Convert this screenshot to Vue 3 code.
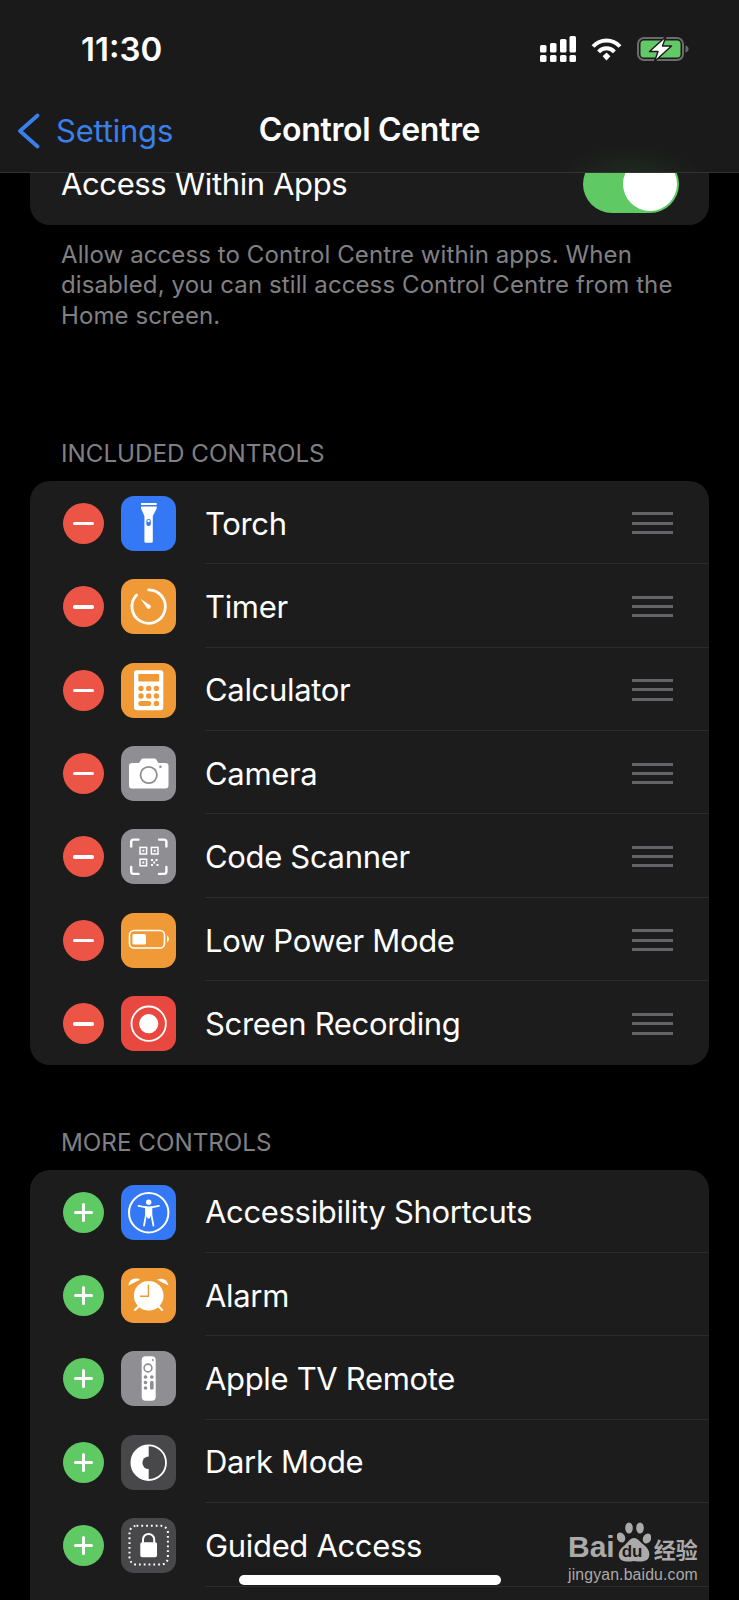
<template>
  <div class="screen">
    <header class="nav">
      <div class="status">
        <span class="time">11:30</span>
        <div class="status-icons">
          <svg width="36" height="26" viewBox="0 0 36 26" fill="#fff">
            <rect x="0" y="19" width="6.5" height="7" rx="1.6" />
            <rect x="10" y="19" width="6.5" height="7" rx="1.6" />
            <rect x="20" y="19" width="6.5" height="7" rx="1.6" />
            <rect x="29.5" y="19" width="6.5" height="7" rx="1.6" />
            <rect x="0" y="9" width="6.5" height="7.5" rx="1.6" />
            <rect x="10" y="7" width="6.5" height="9.5" rx="1.6" />
            <rect x="20" y="3" width="6.5" height="13.5" rx="1.6" />
            <rect x="29.5" y="0" width="6.5" height="16.5" rx="1.6" />
          </svg>
          <svg class="wifi" width="31" height="24" viewBox="0 0 31 24" fill="none" stroke="#fff" stroke-width="4">
            <path d="M2 9.5C9.5 1.5 21.5 1.5 29 9.5" />
            <path d="M7.6 14.8C12 10.2 19 10.2 23.4 14.8" />
            <path d="M11.6 19.2L15.5 15.6L19.4 19.2L15.5 23.4Z" fill="#fff" stroke="none" />
          </svg>
          <svg class="battery" width="52" height="26" viewBox="0 0 52 26">
            <rect x="1" y="2" width="45" height="22" rx="6" fill="none" stroke="#6b6b6b" stroke-width="2" />
            <rect x="3.5" y="4.5" width="40" height="17" rx="3.5" fill="#61ca67" />
            <path d="M48.5 9.5C50.5 10 51.5 11.2 51.5 13S50.5 16 48.5 16.5Z" fill="#6b6b6b" />
            <path d="M29 0.5L12.5 15.5H21L17.5 25.5L34.5 10H25.5Z" fill="#fff" stroke="#1a1a1a" stroke-width="1.4" stroke-linejoin="round" />
          </svg>
        </div>
      </div>
      <div class="bar">
        <span class="back">
          <svg width="23" height="36" viewBox="0 0 23 36" fill="none" stroke="#3a7fea" stroke-width="3.8" stroke-linecap="round" stroke-linejoin="round">
            <path d="M20.5 2.5L3 18L20.5 33.5" />
          </svg>
          Settings
        </span>
        <span class="title">Control Centre</span>
      </div>
    </header>

    <main class="content">
      <section class="group">
        <div class="access">
          <span>Access Within Apps</span>
          <span class="toggle"><i></i></span>
        </div>
      </section>
      <p class="note">Allow access to Control Centre within apps. When disabled, you can still access Control Centre from the Home screen.</p>

      <h2 class="head first">INCLUDED CONTROLS</h2>
      <section class="group">
        <div v-for="c in included" :key="c.name" class="row">
          <span class="mark remove"><i></i></span>
          <span class="icon" :class="c.tone">
            <svg width="55" height="55" viewBox="0 0 55 55">
              <g v-if="c.icon === 'torch'">
                <rect x="20" y="7" width="15.7" height="2" fill="#fff" />
                <path d="M20 10.5H35.7V12.5L31.8 20V45.5Q31.8 46.8 30.5 46.8H24.7Q23.4 46.8 23.4 45.5V20L20 12.5Z" fill="#fff" />
                <rect x="25.4" y="23" width="4.4" height="7" rx="2" fill="#3478f6" />
                <circle cx="27.6" cy="25" r="1.2" fill="#fff" />
              </g>
              <g v-else-if="c.icon === 'timer'" fill="none" stroke="#fff">
                <path d="M27.7 10.9A16.7 16.7 0 1 1 15.6 16" stroke-width="2.8" stroke-linecap="round" />
                <path d="M26.2 29.2L19.5 19.8L29.2 26.2A2.1 2.1 0 0 1 26.2 29.2Z" fill="#fff" stroke="none" />
              </g>
              <g v-else-if="c.icon === 'calculator'">
                <rect x="13" y="7.3" width="29.3" height="40" rx="3" fill="#fff" />
                <rect x="17.3" y="11" width="20.8" height="7.4" rx="1" fill="#f09a37" />
                <g fill="#f09a37">
                  <circle cx="20" cy="25.4" r="2.7" /><circle cx="27.7" cy="25.4" r="2.7" /><circle cx="35.4" cy="25.4" r="2.7" />
                  <circle cx="20" cy="33" r="2.7" /><circle cx="27.7" cy="33" r="2.7" /><circle cx="35.4" cy="33" r="2.7" />
                  <rect x="17.3" y="38" width="13" height="5" rx="2.5" /><circle cx="35.4" cy="40.5" r="2.7" />
                </g>
              </g>
              <g v-else-if="c.icon === 'camera'">
                <path d="M11 17H18L20.5 13.2Q21 12.5 22 12.5H33.5Q34.5 12.5 35 13.2L37.5 17H44.5Q47.5 17 47.5 20V39.5Q47.5 42.5 44.5 42.5H11Q8 42.5 8 39.5V20Q8 17 11 17Z" fill="#fff" />
                <circle cx="27.7" cy="29" r="8.2" fill="none" stroke="#8e8e93" stroke-width="1.8" />
                <circle cx="39.4" cy="20.8" r="1.3" fill="#8e8e93" />
              </g>
              <g v-else-if="c.icon === 'scanner'" fill="none" stroke="#fff">
                <path d="M10.2 17.5V13Q10.2 10.6 12.6 10.6H17.5M38 10.6H43Q45.4 10.6 45.4 13V17.5M45.4 38V42.5Q45.4 44.9 43 44.9H38M17.5 44.9H12.6Q10.2 44.9 10.2 42.5V38" stroke-width="2.4" stroke-linecap="round" />
                <g stroke-width="1.5">
                  <rect x="19" y="18.4" width="6.6" height="6.6" /><rect x="30.4" y="18.4" width="6.6" height="6.6" /><rect x="19" y="30.2" width="6.6" height="6.6" />
                </g>
                <g fill="#fff" stroke="none">
                  <rect x="21.3" y="20.7" width="2" height="2" /><rect x="32.7" y="20.7" width="2" height="2" /><rect x="21.3" y="32.5" width="2" height="2" />
                  <rect x="30" y="30" width="2" height="2" /><rect x="34.5" y="30" width="2" height="2" /><rect x="32.2" y="32.5" width="2" height="2" /><rect x="30" y="35" width="2" height="2" /><rect x="35.5" y="35" width="2" height="2" />
                </g>
              </g>
              <g v-else-if="c.icon === 'power'">
                <rect x="8.5" y="17.5" width="35" height="17.5" rx="4.5" fill="none" stroke="#fff" stroke-width="1.6" />
                <rect x="11.5" y="21" width="13.5" height="10.5" rx="1.5" fill="#fff" />
                <path d="M46 22.5Q48 23.5 48 26T46 29.5Z" fill="#fff" />
              </g>
              <g v-else>
                <circle cx="27.7" cy="27.7" r="17.2" fill="none" stroke="#fff" stroke-width="1.8" />
                <circle cx="27.7" cy="27.7" r="9.6" fill="#fff" />
              </g>
            </svg>
          </span>
          <div class="label">
            <span>{{ c.name }}</span>
            <span class="grip"><i></i><i></i><i></i></span>
          </div>
        </div>
      </section>

      <h2 class="head second">MORE CONTROLS</h2>
      <section class="group open">
        <div v-for="c in more" :key="c.name" class="row">
          <span class="mark add"><i></i></span>
          <span class="icon" :class="c.tone">
            <svg width="55" height="55" viewBox="0 0 55 55">
              <g v-if="c.icon === 'accessibility'">
                <circle cx="27.7" cy="27.7" r="19.7" fill="none" stroke="#fff" stroke-width="2" />
                <circle cx="27.7" cy="17.2" r="2.7" fill="#fff" />
                <path d="M17.5 20.8L25 22.4H30.4L37.9 20.8" fill="none" stroke="#fff" stroke-width="1.8" stroke-linecap="round" stroke-linejoin="round" />
                <path d="M25 22V30L23 40.5M30.4 22V30L32.4 40.5" fill="none" stroke="#fff" stroke-width="1.8" stroke-linecap="round" stroke-linejoin="round" />
                <path d="M25 22H30.4V30L28.6 33.5H26.8L25 30Z" fill="#fff" />
              </g>
              <g v-else-if="c.icon === 'alarm'">
                <path d="M7.4 17.5A7.5 7.5 0 0 1 19 11.8Z" fill="#fff" />
                <path d="M47.4 17.5A7.5 7.5 0 0 0 36 11.8Z" fill="#fff" />
                <path d="M14 42L17.5 38.5M41.2 42L37.7 38.5" stroke="#fff" stroke-width="2" stroke-linecap="round" />
                <circle cx="27.7" cy="27.7" r="14.8" fill="#fff" />
                <path d="M27.4 16.5V28.2H19" fill="none" stroke="#f09a37" stroke-width="1.4" />
              </g>
              <g v-else-if="c.icon === 'remote'">
                <rect x="20.7" y="5.3" width="14" height="44.4" rx="4" fill="#fff" />
                <circle cx="27" cy="17" r="3.9" fill="none" stroke="#8e8e93" stroke-width="1.6" />
                <circle cx="31.8" cy="9" r="1" fill="#8e8e93" />
                <g fill="#8e8e93">
                  <circle cx="24.5" cy="26" r="1.8" /><circle cx="30.8" cy="26" r="1.8" />
                  <circle cx="24.5" cy="31.5" r="1.8" /><circle cx="24.5" cy="37" r="1.8" />
                  <rect x="29" y="29.7" width="3.6" height="9" rx="1.8" />
                </g>
              </g>
              <g v-else-if="c.icon === 'dark'">
                <circle cx="27.7" cy="27.7" r="17.3" fill="none" stroke="#fff" stroke-width="1.8" />
                <path d="M27.7 10.4A17.3 17.3 0 0 0 27.7 45Z" fill="#fff" />
                <circle cx="27.7" cy="27.7" r="6.3" fill="#48484a" />
              </g>
              <g v-else>
                <rect x="8.5" y="7.8" width="38.4" height="38.8" rx="7" fill="none" stroke="#fff" stroke-width="2" stroke-dasharray="1.8 3" />
                <rect x="19.3" y="24.3" width="16.7" height="15" rx="1.8" fill="#fff" />
                <path d="M22 25V21.5A5.6 5.6 0 0 1 33.2 21.5V25" fill="none" stroke="#fff" stroke-width="2" />
              </g>
            </svg>
          </span>
          <div class="label"><span>{{ c.name }}</span></div>
        </div>
      </section>
    </main>

    <div class="home"></div>

    <div class="mark-baidu">
      <div class="brand">
        <span class="bai">Bai</span>
        <span class="paw">
          <svg width="34" height="41" viewBox="0 0 34 41" fill="#aaa">
            <ellipse cx="4" cy="15.5" rx="4" ry="5.2" transform="rotate(-25 4 15.5)" />
            <ellipse cx="12" cy="6" rx="3.8" ry="5.6" />
            <ellipse cx="23" cy="6" rx="3.8" ry="5.6" />
            <ellipse cx="30" cy="16.5" rx="4" ry="5.2" transform="rotate(25 30 16.5)" />
            <path d="M17 16C21 16 23 20 27 23C32 27 33 31 32 35C30 40 24 40 17 39C10 40 4 40 2 35C1 30 3 27 8 23C11 20 13 16 17 16Z" />
          </svg>
          <em>du</em>
        </span>
        <span class="jy">经验</span>
      </div>
      <div class="url">jingyan.baidu.com</div>
    </div>
  </div>
</template>

<script setup>
const included = [
  { name: 'Torch', icon: 'torch', tone: 'blue' },
  { name: 'Timer', icon: 'timer', tone: 'orange' },
  { name: 'Calculator', icon: 'calculator', tone: 'orange' },
  { name: 'Camera', icon: 'camera', tone: 'gray' },
  { name: 'Code Scanner', icon: 'scanner', tone: 'gray' },
  { name: 'Low Power Mode', icon: 'power', tone: 'orange' },
  { name: 'Screen Recording', icon: 'record', tone: 'red' }
]

const more = [
  { name: 'Accessibility Shortcuts', icon: 'accessibility', tone: 'blue' },
  { name: 'Alarm', icon: 'alarm', tone: 'orange' },
  { name: 'Apple TV Remote', icon: 'remote', tone: 'gray' },
  { name: 'Dark Mode', icon: 'dark', tone: 'dim' },
  { name: 'Guided Access', icon: 'guided', tone: 'dim' }
]
</script>

<style>
html, body { background: #000; }
</style>

<style scoped>
.screen { position: relative; width: 739px; height: 1600px; overflow: hidden; background: #000; color: #fff; font-family: Inter, "Noto Sans", sans-serif; }

.nav { position: absolute; top: 0; left: 0; right: 0; z-index: 2; height: 173px; box-sizing: border-box; border-bottom: 1px solid #333; background: radial-gradient(70px 28px at 630px 175px, #1f2b20, rgba(26, 26, 26, 0) 100%), #1a1a1a; }
.status { height: 98px; display: flex; align-items: center; justify-content: space-between; padding-right: 50px; box-sizing: border-box; }
.time { margin-left: 81px; font-size: 33px; font-weight: 600; letter-spacing: 0; }
.status-icons { display: flex; align-items: center; gap: 15px; }
.bar { position: relative; height: 62px; display: flex; align-items: center; justify-content: center; }
.back { position: absolute; left: 17px; top: 14px; display: flex; align-items: center; gap: 16px; color: #3a7fea; font-size: 31px; letter-spacing: -0.2px; }
.title { font-size: 32px; font-weight: 600; letter-spacing: -0.35px; }

.content { padding: 142px 30px 0; }
.group { background: #1c1c1c; border-radius: 20px; overflow: hidden; }
.access { height: 83px; display: flex; align-items: center; justify-content: space-between; padding: 0 30px 0 31px; font-size: 31px; letter-spacing: -0.38px; }
.toggle { width: 96px; height: 58px; border-radius: 29px; background: #5fc964; display: flex; align-items: center; justify-content: flex-end; padding-right: 2px; box-sizing: border-box; }
.toggle i { width: 54px; height: 54px; border-radius: 50%; background: #fff; }
.note { margin: 15px 20px 0 31px; font-size: 24px; line-height: 30.3px; color: #808084; letter-spacing: 0.1px; }
.head { margin: 0 0 0 31px; font-size: 24.2px; font-weight: 400; line-height: 30px; color: #808084; }
.head.first { margin-top: 108px; margin-bottom: 12px; }
.head.second { margin-top: 63px; margin-bottom: 12px; }

.row { height: 83.4px; display: flex; align-items: center; padding-left: 33px; }
.mark { position: relative; flex: none; width: 41px; height: 41px; margin-top: 1.5px; border-radius: 50%; }
.remove { background: #ec5545; }
.add { background: #5fc964; }
.mark i { position: absolute; left: 10px; top: 19px; width: 21px; height: 3.4px; border-radius: 1.7px; background: #fff; }
.add i { left: 11px; top: 19px; width: 19px; height: 3px; }
.add i::after { content: ""; position: absolute; left: 8px; top: -8px; width: 3px; height: 19px; border-radius: 1.5px; background: #fff; }
.icon { flex: none; width: 55px; height: 55px; margin-top: 1.5px; margin-left: 17px; border-radius: 13px; }
.icon svg { display: block; }
.blue { background: #3478f6; }
.orange { background: #f09a37; }
.gray { background: #8e8e93; }
.red { background: #e8483f; }
.dim { background: #48484a; }
.label { flex: 1; height: 100%; margin-left: 29px; box-sizing: border-box; padding-top: 2px; padding-right: 36px; display: flex; align-items: center; justify-content: space-between; border-bottom: 1px solid #2c2c2e; font-size: 31px; letter-spacing: -0.33px; }
.group:not(.open) .row:last-child .label { border-bottom: 0; }
.group.open { padding-bottom: 60px; }
.grip { display: flex; flex-direction: column; gap: 6.2px; }
.grip i { display: block; width: 41px; height: 3px; background: #646468; }

.home { position: absolute; left: 239px; top: 1575px; z-index: 3; width: 262px; height: 10px; border-radius: 5px; background: #fff; }

.mark-baidu { position: absolute; left: 568px; top: 1522px; z-index: 3; width: 134px; color: #aaa; }
.brand { display: flex; align-items: flex-end; height: 41px; }
.bai { font-family: "Liberation Sans", sans-serif; font-size: 30px; font-weight: 700; line-height: 30px; margin-right: 2px; margin-bottom: 1px; }
.paw { position: relative; width: 34px; height: 41px; flex: none; }
.paw svg { display: block; }
.paw em { position: absolute; left: 5px; bottom: 0; font-family: "Liberation Sans", sans-serif; font-size: 17px; font-style: normal; font-weight: 700; line-height: 22px; color: #1c1c1c; }
.jy { margin-left: 3px; font-family: "Noto Sans CJK SC", sans-serif; font-size: 22px; font-weight: 700; line-height: 29px; }
.url { margin-top: 3px; font-family: "Liberation Sans", sans-serif; font-size: 15.8px; line-height: 18px; letter-spacing: 0.15px; }
</style>
